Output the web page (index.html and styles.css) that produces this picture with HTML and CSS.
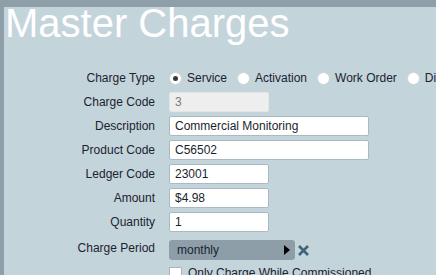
FILE: index.html
```html
<!DOCTYPE html>
<html lang="en">
<head>
    <meta charset="UTF-8">
    <meta name="viewport" content="width=device-width, initial-scale=1.0">
    <title>Master Charges</title>
    <link rel="stylesheet" href="styles.css">
</head>
<body>
    <div class="page">
        <h1 class="page-title">Master Charges</h1>

        <div class="charge-form">
            <div class="field-label">Charge Type</div>
            <div class="radio-group">
                <label class="radio-option"><span class="radio checked"></span>Service</label>
                <label class="radio-option"><span class="radio"></span>Activation</label>
                <label class="radio-option"><span class="radio"></span>Work Order</label>
                <label class="radio-option"><span class="radio"></span>Discount</label>
            </div>

            <div class="field-label">Charge Code</div>
            <div><input class="text-input short disabled" type="text" value="3" disabled></div>

            <div class="field-label">Description</div>
            <div><input class="text-input long" type="text" value="Commercial Monitoring"></div>

            <div class="field-label">Product Code</div>
            <div><input class="text-input long" type="text" value="C56502"></div>

            <div class="field-label">Ledger Code</div>
            <div><input class="text-input short" type="text" value="23001"></div>

            <div class="field-label">Amount</div>
            <div><input class="text-input short" type="text" value="$4.98"></div>

            <div class="field-label">Quantity</div>
            <div><input class="text-input short" type="text" value="1"></div>

            <div class="field-label period-label">Charge Period</div>
            <div class="period-row">
                <div class="period-select">
                    <span>monthly</span>
                    <span class="select-arrow"></span>
                </div>
                <svg class="clear-icon" width="13" height="13" viewBox="0 0 13 13">
                    <path d="M2 2 L11 11 M11 2 L2 11" stroke="#3f6379" stroke-width="2.6" fill="none"/>
                </svg>
            </div>

            <div></div>
            <label class="checkbox-option"><span class="checkbox"></span>Only Charge While Commissioned</label>
        </div>
    </div>
</body>
</html>
```

FILE: styles.css
```css
html, body {
    margin: 0;
    padding: 0;
    height: 100%;
    overflow: hidden;
}

body {
    background-color: #8e9fa9;
    font-family: 'Liberation Sans', Arial, sans-serif;
    font-size: 12px;
    color: #1b2230;
}

.page {
    margin-top: 7px;
    margin-left: 4px;
    height: 100%;
    background-color: #c4d4db;
}

.page-title {
    margin: 0;
    padding-left: 1px;
    font-size: 40px;
    font-weight: normal;
    line-height: 32px;
    color: #fff;
}

.charge-form {
    margin-top: 29px;
    display: grid;
    grid-template-columns: 151px 1fr;
    column-gap: 14px;
    row-gap: 4px;
    white-space: nowrap;
}

.field-label {
    height: 20px;
    line-height: 20px;
    text-align: right;
}

.period-label {
    margin-top: 4px;
    line-height: 16px;
}

.radio-group {
    display: flex;
    height: 20px;
    align-items: center;
    gap: 10px;
}

.radio-option {
    display: flex;
    align-items: center;
    gap: 5px;
}

.radio {
    box-sizing: border-box;
    width: 13px;
    height: 13px;
    border-radius: 50%;
    background-color: #fff;
    border: 1px solid #cfd6da;
    display: flex;
    align-items: center;
    justify-content: center;
}

.radio.checked::after {
    content: "";
    width: 5px;
    height: 5px;
    border-radius: 50%;
    background-color: #3a3a3a;
}

.text-input {
    box-sizing: border-box;
    height: 20px;
    margin: 0;
    padding: 0 5px;
    border: 1px solid #a9bac2;
    border-radius: 2px;
    background-color: #fff;
    font-family: 'Liberation Sans', Arial, sans-serif;
    font-size: 12px;
    color: #1a1f2e;
    display: block;
}

.text-input.short {
    width: 100px;
}

.text-input.long {
    width: 200px;
}

.text-input.disabled {
    background-color: #eeeeee;
    border-color: #e3e6e8;
    color: #7a7a7a;
}

.period-row {
    margin-top: 4px;
    display: flex;
    align-items: center;
    gap: 2px;
}

.period-select {
    box-sizing: border-box;
    width: 126px;
    height: 20px;
    padding: 0 5px 0 8px;
    border-radius: 3px;
    background-color: #8d9ea8;
    display: flex;
    align-items: center;
    justify-content: space-between;
    color: #1a2430;
}

.select-arrow {
    width: 0;
    height: 0;
    border-top: 5px solid transparent;
    border-bottom: 5px solid transparent;
    border-left: 6px solid #000;
}

.checkbox-option {
    margin-top: 3px;
    display: flex;
    align-items: flex-start;
    gap: 6px;
    line-height: 13px;
}

.checkbox {
    box-sizing: border-box;
    width: 13px;
    height: 13px;
    background-color: #fff;
    border: 1px solid #aab6bc;
}
```
